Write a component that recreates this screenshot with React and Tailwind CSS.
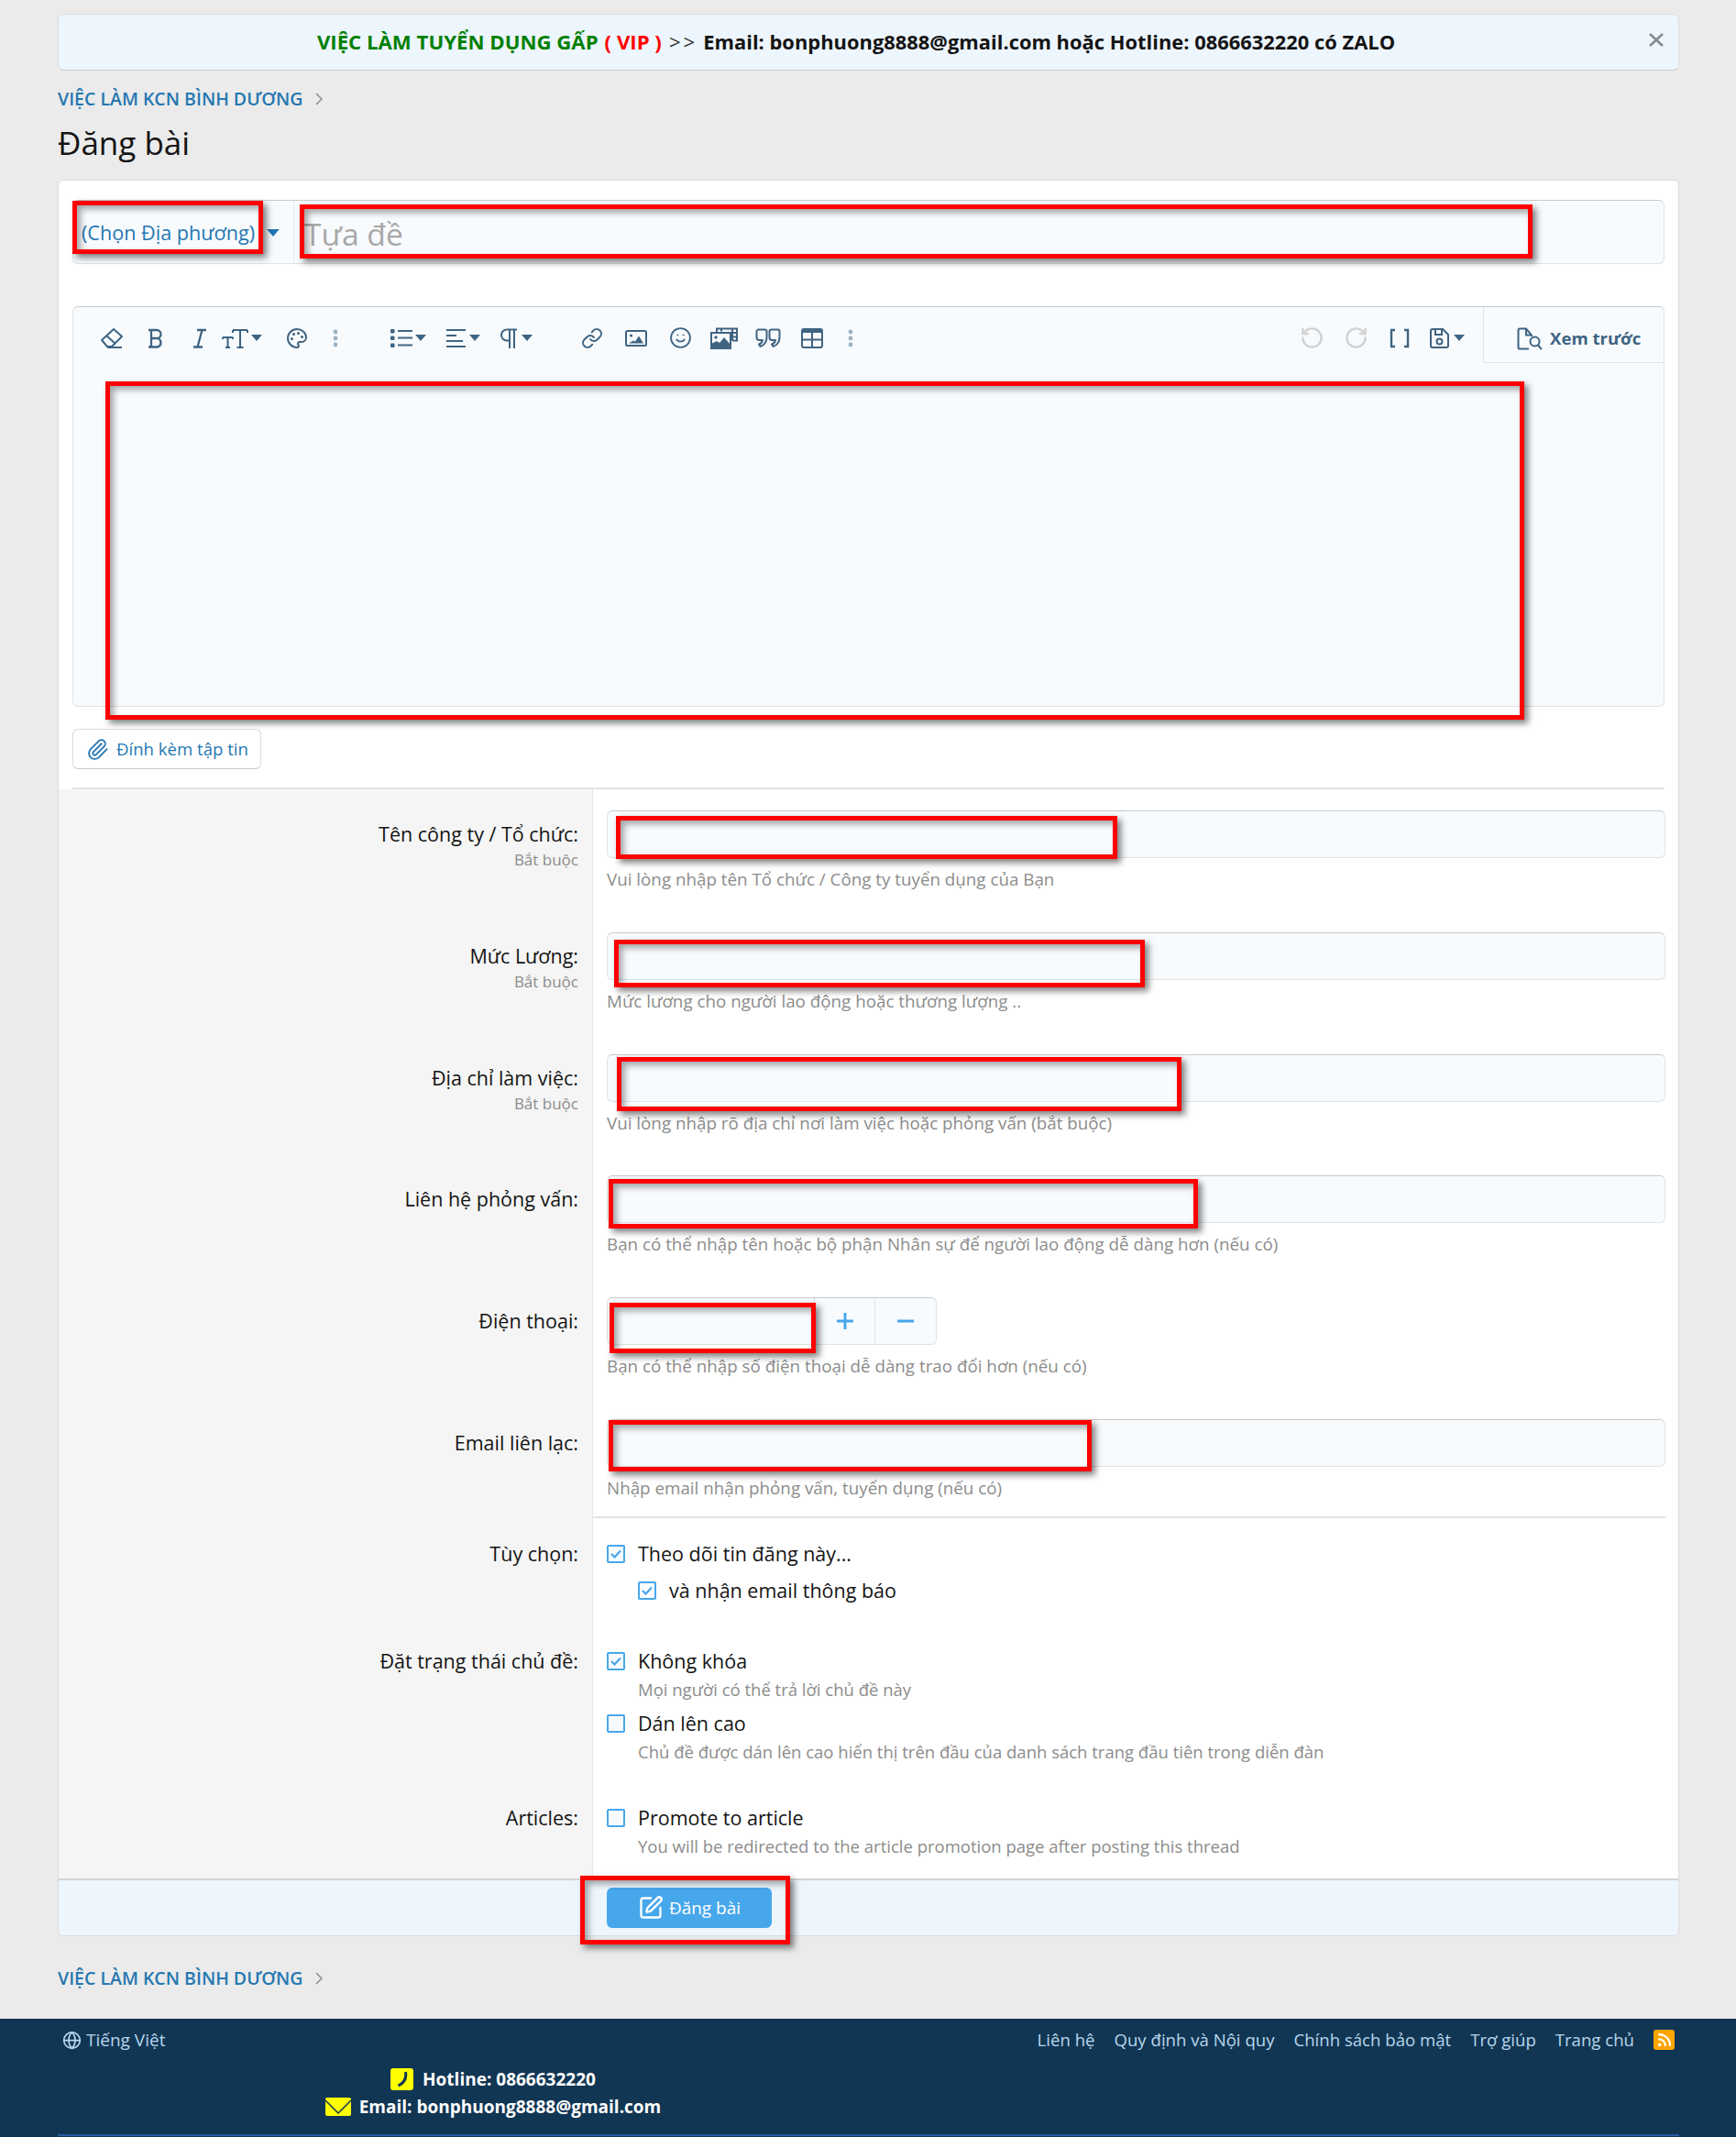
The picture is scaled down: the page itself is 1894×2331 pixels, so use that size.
import { Globe, Link, Paperclip, Palette, Rss, RotateCcw, RotateCw, Smile, SquarePen } from 'lucide-react';

const ink = '#3f6482';

const Svg = ({ children, w = 24, h = 24 }) => (
  <svg width={w} height={h} viewBox={`0 0 ${w} ${h}`} fill="none" stroke={ink} strokeWidth="2">
    {children}
  </svg>
);

const Caret = ({ color = ink, w = 12, h = 7 }) => (
  <svg width={w} height={h} viewBox="0 0 12 7" className="ml-[1px]">
    <polygon points="0,0 12,0 6,7" fill={color} />
  </svg>
);

const Dots = () => (
  <svg width="6" height="20" viewBox="0 0 6 20">
    <circle cx="3" cy="3" r="2.4" fill="#9db3c4" />
    <circle cx="3" cy="10" r="2.4" fill="#9db3c4" />
    <circle cx="3" cy="17" r="2.4" fill="#9db3c4" />
  </svg>
);

const Eraser = () => (
  <Svg w={26} h={24}>
    <path d="M2 14 15 2l9 8-11 11H8z" strokeLinejoin="round" />
    <path d="M7 9l10 9M8 22h16" />
  </Svg>
);
const BoldIcon = () => (
  <Svg w={18} h={22}>
    <path d="M1 2h9a4.5 4.5 0 0 1 0 9H4M4 11h7a5 5 0 0 1 0 9.5H1M4 2v18.5" strokeWidth="2.3" />
  </Svg>
);
const ItalicIcon = () => (
  <Svg w={16} h={22}>
    <path d="M5 2h10M1 20.5h10M10.5 2 5.5 20.5" strokeWidth="2.3" />
  </Svg>
);
const TextSize = () => (
  <Svg w={29} h={24}>
    <path d="M12 3h16M20 3v19M16.500 22h7M12 3v3M28 3v3M1 11h11M6.500 11v11M4 22h5M1 11v2M12 11v2" strokeWidth="2.1" />
  </Svg>
);
const ListIcon = () => (
  <svg width="24" height="20" viewBox="0 0 24 20" fill={ink}>
    <rect x="0" y="0" width="4.5" height="4.5" rx="1" />
    <rect x="0" y="7.5" width="4.5" height="4.5" rx="1" />
    <rect x="0" y="15.5" width="4.5" height="4.5" rx="1" />
    <rect x="8" y="1" width="16" height="2" />
    <rect x="8" y="8.5" width="16" height="2" />
    <rect x="8" y="16.5" width="16" height="2" />
  </svg>
);
const AlignIcon = () => (
  <svg width="21" height="20" viewBox="0 0 21 20" fill={ink}>
    <rect x="0" y="0" width="21" height="2" />
    <rect x="0" y="6" width="11" height="2" />
    <rect x="0" y="12" width="18" height="2" />
    <rect x="0" y="18" width="21" height="2" />
  </svg>
);
const Pilcrow = () => (
  <Svg w={18} h={22}>
    <path d="M18 1.5H7a6 6 0 0 0 0 12h3M10 1.5V22M15 1.5V22" />
  </Svg>
);
const ImageIcon = () => (
  <svg width="24" height="20" viewBox="0 0 24 20" fill="none" stroke={ink} strokeWidth="2">
    <rect x="1" y="2" width="22" height="16" rx="1.5" />
    <circle cx="6.5" cy="7" r="1.6" fill={ink} stroke="none" />
    <path d="M4 15.5l5-3 2 1 4-6 5 8z" fill={ink} stroke="none" />
  </svg>
);
const MediaIcon = () => (
  <svg width="30" height="24" viewBox="0 0 30 24" fill="none" stroke={ink} strokeWidth="2">
    <path d="M7 5V1.5h22v13h-5M24 1.5v13M24 6h5M24 10.5h5M12 1.5v3" />
    <rect x="1" y="6" width="21" height="17" fill="#f8fbfe" />
    <path d="M1 23v-5l6-3 3 2 5-6 7 8v4z" fill={ink} stroke="none" />
    <circle cx="6" cy="11" r="1.7" fill={ink} stroke="none" />
  </svg>
);
const QuoteIcon = () => (
  <Svg w={28} h={22}>
    <path d="M1.5 3.5a2 2 0 0 1 2-2h7a2 2 0 0 1 2 2V10c0 5-3 9-7 10l-1.5-2.5c2-.5 3.5-2 4-4.500H4.500a3 3 0 0 1-3-3z" strokeLinejoin="round" />
    <path d="M15.5 3.5a2 2 0 0 1 2-2h7a2 2 0 0 1 2 2V10c0 5-3 9-7 10l-1.5-2.5c2-.5 3.5-2 4-4.500h-3.500a3 3 0 0 1-3-3z" strokeLinejoin="round" />
  </Svg>
);
const TableIcon = () => (
  <svg width="24" height="22" viewBox="0 0 24 22" fill="none" stroke={ink} strokeWidth="2">
    <rect x="1" y="1" width="22" height="20" rx="2" />
    <rect x="1" y="1" width="22" height="4" fill={ink} stroke="none" />
    <path d="M1 12.5h22M12 2v19" />
  </svg>
);
const Brackets = () => (
  <Svg w={22} h={22}>
    <path d="M6 2H2v18h4M16 2h4v18h-4" strokeWidth="2.4" />
  </Svg>
);
const SaveIcon = () => (
  <Svg w={21} h={22}>
    <path d="M1 3a2 2 0 0 1 2-2h11l6 6v12a2 2 0 0 1-2 2H3a2 2 0 0 1-2-2z" />
    <path d="M6 1v6h7V1" />
    <circle cx="10.5" cy="14.5" r="3" />
  </Svg>
);
const PreviewIcon = () => (
  <Svg w={28} h={25}>
    <path d="M13 23.5H3A1.5 1.5 0 0 1 1.5 22V3A1.5 1.5 0 0 1 3 1.5h7l6 7V10" />
    <path d="M10 1.5v7h6" />
    <circle cx="19.5" cy="15.5" r="5" />
    <path d="M23 19.5l4 4.5" />
  </Svg>
);

const Tool = ({ className = 'w-12 justify-center', children }) => (
  <div className={`flex h-full items-center ${className}`}>{children}</div>
);

const Checkbox = ({ checked }) => (
  <span className="flex h-5 w-5 shrink-0 items-center justify-center rounded-[2px] border-2 border-[#47a7eb] bg-[#f8fbfe]">
    {checked && (
      <svg width="12" height="10" viewBox="0 0 12 10" fill="none" stroke="#47a7eb" strokeWidth="2.2">
        <path d="M1 5l3.5 3.5L11 1.5" />
      </svg>
    )}
  </span>
);

const Option = ({ checked, label, hint, className = '' }) => (
  <div className={className}>
    <label className="flex h-[30px] items-center gap-[14px] text-[21.5px] text-[#141414]">
      <Checkbox checked={checked} />
      {label}
    </label>
    {hint && <div className="mt-[3px] pl-[34px] text-[18.5px] leading-[26px] text-[#8c8c8c]">{hint}</div>}
  </div>
);

const Row = ({ label, required, className = 'h-[132.8px]', pad = 'pt-[34px]', children, valuePad = 'pt-[23px] pr-[14px]', valueClass = '' }) => (
  <div className={`flex ${className}`}>
    <div className={`w-[583px] shrink-0 border-r border-[#e6e6e6] bg-[#f5f5f5] pr-[15px] text-right ${pad}`}>
      <div className="text-[21.5px] leading-[30px] text-[#141414]">{label}</div>
      {required && <div className="mt-[1px] text-[17px] leading-[24px] text-[#8c8c8c]">Bắt buộc</div>}
    </div>
    <div className={`min-w-0 flex-1 ${valueClass}`}>
      <div className={`pl-[15px] ${valuePad}`}>{children}</div>
    </div>
  </div>
);

const Hint = ({ children }) => (
  <div className="mt-[10px] text-[18.8px] leading-[26px] text-[#8c8c8c]">{children}</div>
);

const Field = ({ hint }) => (
  <>
    <input className="block h-[52px] w-full rounded-md border border-[#dfe3e6] border-t-[#c9c9c9] bg-[#f8fbfe] px-3 outline-none" />
    <Hint>{hint}</Hint>
  </>
);

const Breadcrumb = ({ className = '' }) => (
  <div className={`flex h-[30px] items-center gap-[14px] text-[19.5px] font-semibold text-[#2577b1] ${className}`}>
    VIỆC LÀM KCN BÌNH DƯƠNG
    <svg width="8" height="14" viewBox="0 0 8 14" fill="none" stroke="#8c8c8c" strokeWidth="1.5">
      <path d="M1 1l6 6-6 6" />
    </svg>
  </div>
);

const RedBox = ({ className }) => (
  <div className={`pointer-events-none absolute border-[5px] border-[#ff0000] shadow-[4px_4px_7px_rgba(0,0,0,0.5),inset_4px_4px_7px_rgba(0,0,0,0.35)] ${className}`} />
);

const App = () => {
  return (
    <div className="relative h-[2331px] overflow-hidden bg-[#ebebeb] font-['Open_Sans',sans-serif]">
      <div className="pl-[63px] pr-[62px] pt-[15px]">
        <div className="relative flex h-[62px] items-center justify-center rounded-md border border-[#dcdcdc] border-b-[#c9c9c9] bg-[#edf5fd] pl-[24px] pr-[51px] text-[22.2px] font-bold">
          <span className="text-[#008000]">VIỆC LÀM TUYỂN DỤNG GẤP</span>
          <span className="ml-[7px] text-[#ff0000]">( VIP )</span>
          <span className="ml-[8px] font-normal tracking-[3px] text-[#333]">&gt;&gt;</span>
          <span className="ml-[6px] text-[21.9px] text-[#141414]">Email: bonphuong8888@gmail.com hoặc Hotline: 0866632220 có ZALO</span>
          <svg className="absolute right-[16px] top-[20px]" width="16" height="15" viewBox="0 0 16 15" fill="none" stroke="#8a8a8a" strokeWidth="2.6">
            <path d="M1 1l14 13M15 1 1 14" />
          </svg>
        </div>

        <Breadcrumb className="mt-[16px]" />
        <h1 className="mt-[9px] h-[49px] text-[35px] leading-[48px] text-[#141414]">Đăng bài</h1>

        <div className="mt-[15px] h-[1916px] overflow-hidden rounded-md border border-[#dcdcdc] bg-white">
          <div className="px-[15px] pt-[21px]">
            <div className="flex h-[70px] rounded-md border border-[#dfe3e6] border-t-[#c9c9c9] bg-[#f8fbfe]">
              <div className="flex w-[241px] shrink-0 items-center gap-[12px] border-r border-[#e6e9ec] pl-[9px] pt-[2px] text-[21.6px] text-[#2577b1]">
                (Chọn Địa phương)
                <Caret color="#2577b1" w={14} h={8} />
              </div>
              <input
                placeholder="Tựa đề"
                className="min-w-0 flex-1 bg-transparent pl-[11px] pt-[5px] text-[33.7px] outline-none placeholder:text-[#a8a8a8]"
              />
            </div>

            <div className="mt-[46px] h-[437px] rounded-md border border-[#dfe3e6] border-t-[#c9c9c9] bg-[#f8fbfe]">
              <div className="flex h-[61px]">
                <div className="flex items-center pl-[18px] pt-[6px]">
                  <Tool><Eraser /></Tool>
                  <Tool><BoldIcon /></Tool>
                  <Tool><ItalicIcon /></Tool>
                  <Tool className="w-[58px] gap-[2px]"><TextSize /><Caret /></Tool>
                  <Tool><Palette size={24} color={ink} strokeWidth={2} /></Tool>
                  <Tool className="w-9 justify-center"><Dots /></Tool>
                </div>
                <div className="ml-[31px] flex items-center pt-[6px]">
                  <Tool className="w-[60px] justify-center gap-[2px]"><ListIcon /><Caret /></Tool>
                  <Tool className="w-[60px] justify-center gap-[3px]"><AlignIcon /><Caret /></Tool>
                  <Tool className="w-[56px] justify-center gap-[4px]"><Pilcrow /><Caret /></Tool>
                </div>
                <div className="ml-[31px] flex items-center pt-[6px]">
                  <Tool><Link size={24} color={ink} strokeWidth={2} /></Tool>
                  <Tool><ImageIcon /></Tool>
                  <Tool><Smile size={25} color={ink} strokeWidth={1.8} /></Tool>
                  <Tool><MediaIcon /></Tool>
                  <Tool><QuoteIcon /></Tool>
                  <Tool><TableIcon /></Tool>
                  <Tool className="w-9 justify-center"><Dots /></Tool>
                </div>
                <div className="ml-auto flex items-center pr-[11px] pt-[6px]">
                  <Tool><RotateCcw size={27} color="#d2d2d2" strokeWidth={2.2} /></Tool>
                  <Tool><RotateCw size={27} color="#d2d2d2" strokeWidth={2.2} /></Tool>
                  <Tool><Brackets /></Tool>
                  <Tool className="w-[56px] justify-center gap-[4px]"><SaveIcon /><Caret /></Tool>
                </div>
                <div className="flex w-[197px] items-center gap-[8px] border-b border-l border-[#dfe3e6] pl-[36px] pt-[8px] text-[18.6px] font-bold text-[#3f6482]">
                  <PreviewIcon />
                  Xem trước
                </div>
              </div>
            </div>

            <div className="mt-[24px] flex h-[44px] w-[206px] items-center gap-[8px] rounded-md border border-[#dcdcdc] border-b-[#c9c9c9] bg-white pl-[14px] text-[18.6px] text-[#2577b1]">
              <Paperclip size={25} color="#2577b1" strokeWidth={1.8} />
              Đính kèm tập tin
            </div>
            <div className="mt-[20px] h-[2px] bg-[#e3e3e3]" />
          </div>

          <Row label="Tên công ty / Tổ chức:" required>
            <Field hint="Vui lòng nhập tên Tổ chức / Công ty tuyển dụng của Bạn" />
          </Row>
          <Row label="Mức Lương:" required>
            <Field hint="Mức lương cho người lao động hoặc thương lượng .." />
          </Row>
          <Row label="Địa chỉ làm việc:" required>
            <Field hint="Vui lòng nhập rõ địa chỉ nơi làm việc hoặc phỏng vấn (bắt buộc)" />
          </Row>
          <Row label="Liên hệ phỏng vấn:">
            <Field hint="Bạn có thể nhập tên hoặc bộ phận Nhân sự để người lao động dễ dàng hơn (nếu có)" />
          </Row>
          <Row label="Điện thoại:">
            <div className="flex h-[52px] w-[360px] rounded-md border border-[#dfe3e6] border-t-[#c9c9c9] bg-[#f8fbfe]">
              <input className="h-full w-[225px] bg-transparent outline-none" />
              <div className="flex w-[66px] items-center justify-center border-l border-[#dfe3e6]">
                <svg width="18" height="18" viewBox="0 0 18 18" stroke="#47a7eb" strokeWidth="3"><path d="M9 0v18M0 9h18" /></svg>
              </div>
              <div className="flex flex-1 items-center justify-center border-l border-[#dfe3e6]">
                <svg width="18" height="18" viewBox="0 0 18 18" stroke="#47a7eb" strokeWidth="3"><path d="M0 9h18" /></svg>
              </div>
            </div>
            <Hint>Bạn có thể nhập số điện thoại dễ dàng trao đổi hơn (nếu có)</Hint>
          </Row>
          <Row label="Email liên lạc:" className="h-[131px]" valueClass="mr-[14px] border-b-2 border-[#e3e3e3]" valuePad="pt-[23px]">
            <Field hint="Nhập email nhận phỏng vấn, tuyển dụng (nếu có)" />
          </Row>

          <Row label="Tùy chọn:" className="h-[118px]" pad="pt-[24px]" valuePad="pt-[24px]">
            <Option checked label="Theo dõi tin đăng này..." />
            <Option checked label="và nhận email thông báo" className="ml-[34px] mt-[10px]" />
          </Row>
          <Row label="Đặt trạng thái chủ đề:" className="h-[171px]" pad="pt-[23px]">
            <Option checked label="Không khóa" hint="Mọi người có thể trả lời chủ đề này" />
            <Option label="Dán lên cao" hint="Chủ đề được dán lên cao hiển thị trên đầu của danh sách trang đầu tiên trong diễn đàn" className="mt-[9px]" />
          </Row>
          <Row label="Articles:" className="h-[104px]" pad="pt-[23px]">
            <Option label="Promote to article" hint="You will be redirected to the article promotion page after posting this thread" />
          </Row>

          <div className="h-[62px] border-t-2 border-[#d4d4d4] bg-[#edf5fd] pl-[598px] pt-[8px]">
            <button className="flex h-[44px] w-[180px] items-center justify-center gap-[6px] rounded-md bg-[#47a7eb] text-[19px] text-white">
              <SquarePen size={28} color="#ffffff" strokeWidth={2} />
              Đăng bài
            </button>
          </div>
        </div>

        <Breadcrumb className="mt-[31px]" />
      </div>

      <footer className="mt-[29px] h-[129px] bg-[#113654] pl-[63px] pr-[62px] pt-[8px]">
        <div className="flex h-[30px] items-center text-[18.6px] text-[#b7d6ec]">
          <div className="flex items-center gap-[5px] pl-[5px] text-[19px]">
            <Globe size={21} color="#b7d6ec" strokeWidth={2} />
            Tiếng Việt
          </div>
          <nav className="ml-auto flex items-center gap-[21px] pr-[5px]">
            <span>Liên hệ</span>
            <span>Quy định và Nội quy</span>
            <span>Chính sách bảo mật</span>
            <span>Trợ giúp</span>
            <span>Trang chủ</span>
            <span className="flex h-[22px] w-[23px] items-center justify-center rounded-[3px] bg-[#ffa500]">
              <Rss size={18} color="#ffffff" strokeWidth={3} />
            </span>
          </nav>
        </div>
        <div className="mt-[13px] w-[950px] text-[19px] font-bold text-white">
          <div className="flex h-[30px] items-center justify-center gap-[10px]">
            <span className="flex h-[24px] w-[25px] items-center justify-center rounded-[3px] bg-[#ffff00]">
              <svg width="13" height="18" viewBox="0 0 13 18" fill="none" stroke="#113654" strokeWidth="3">
                <path d="M10.5 1c1 6-1 12-8 15" />
              </svg>
            </span>
            Hotline: 0866632220
          </div>
          <div className="flex h-[30px] items-center justify-center gap-[9px]">
            <span className="flex h-[20px] w-[28px] rounded-[2px] bg-[#ffff00]">
              <svg width="28" height="20" viewBox="0 0 28 20" fill="none" stroke="#113654" strokeWidth="1.5">
                <path d="M0 3l14 14L28 3" />
              </svg>
            </span>
            Email: bonphuong8888@gmail.com
          </div>
        </div>
        <div className="mt-[15px] h-[2px] bg-[#2a5aa0]" />
      </footer>

      <RedBox className="left-[79px] top-[219px] h-[58px] w-[208px]" />
      <RedBox className="left-[327px] top-[223px] h-[59px] w-[1345px]" />
      <RedBox className="left-[115px] top-[416px] h-[369px] w-[1548px]" />
      <RedBox className="left-[672px] top-[890px] h-[47px] w-[547px]" />
      <RedBox className="left-[670px] top-[1025px] h-[52px] w-[579px]" />
      <RedBox className="left-[673px] top-[1153px] h-[59px] w-[616px]" />
      <RedBox className="left-[664px] top-[1286px] h-[54px] w-[643px]" />
      <RedBox className="left-[665px] top-[1421px] h-[55px] w-[225px]" />
      <RedBox className="left-[664px] top-[1549px] h-[56px] w-[527px]" />
      <RedBox className="left-[633px] top-[2046px] h-[75px] w-[229px]" />
    </div>
  );
};

export default App;
